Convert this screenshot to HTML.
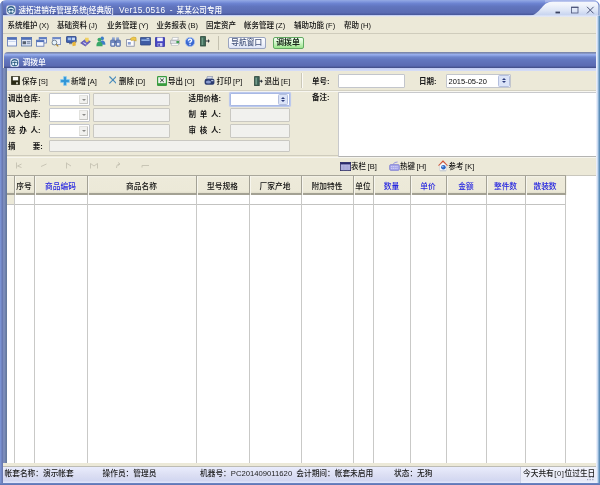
<!DOCTYPE html>
<html lang="zh-CN">
<head>
<meta charset="utf-8">
<title>速拓进销存管理系统[经典版]</title>
<style>
*{box-sizing:border-box;margin:0;padding:0}
html,body{width:600px;height:485px;overflow:hidden;background:#fff}
body{position:relative;font-family:"Liberation Sans","Noto Sans CJK SC",sans-serif;font-size:7.5px;line-height:9px;color:#111;-webkit-font-smoothing:antialiased}
.a{position:absolute;white-space:nowrap}
.t{position:absolute;white-space:nowrap;font-weight:500;color:#0c0c0c;letter-spacing:0}
.w{color:#fff}
.bl{color:#2626e0}
#win{filter:blur(0.3px);position:absolute;left:0;top:0;width:600px;height:485px;background:#ece9d8;border-radius:6px 7px 0 0;overflow:hidden}
#lb{left:0;top:0;width:3.2px;height:485px;background:linear-gradient(90deg,#7c94d6 0,#7890d0 1.2px,#6a7ab2 1.8px,#6878b0 3.2px)}
#rb{left:596.3px;top:16px;width:3.7px;height:469px;background:linear-gradient(90deg,#f1f2fc 0,#e6ecf9 0.9px,#b9d1ec 1.8px,#82aad0 2.7px,#5e8eb8 3.4px,#5e8eb8 3.7px)}
#bb{left:0;top:483.2px;width:600px;height:1.8px;background:linear-gradient(#7088c4,#5c74b4)}
#title{left:0;top:0;width:600px;height:16.5px}
#menu{left:3.3px;top:16.5px;width:593px;height:17px;background:#ece9d8;border-bottom:1px solid #cfccbc}
#tb{left:3.3px;top:34px;width:593px;height:19px;background:#ece9d8}
.ic{position:absolute;top:37px;width:10px;height:10px}
.btn{position:absolute;top:37.4px;height:11.5px;border:1px solid #9aa4bf;border-radius:2px;background:linear-gradient(#fdfdff,#f1f3fb 55%,#dde3f6);text-align:center;line-height:9.4px;font-weight:500;font-size:7.7px}
#child{left:4px;top:53.5px;width:593px;height:411px;background:#ece9d8}
#ctitle{left:4px;top:51.5px;width:593px;height:16.2px;background:linear-gradient(#7c88ac 0,#7c88ac 1.3px,#9cb2ee 1.8px,#94aaea 3px,#6f86cc 5px,#6276be 8px,#5a6ab2 14px,#46528e 15.3px,#44508c 16.2px);border-radius:4px 0 0 0}
#cstrip{left:4px;top:67.7px;width:593px;height:3px;background:linear-gradient(#c2ccf3,#d6def8)}
#clb{left:3.2px;top:68px;width:3.8px;height:395.3px;background:linear-gradient(90deg,#7b8cba 0,#7b8cba 2.2px,#667a9e 2.7px,#667a9e 3.5px,#d8dff6 3.8px)}
.inp{position:absolute;background:#fff;border:1px solid #c3c6cc;border-radius:1px}
.dis{position:absolute;background:#f1f1ee;border:1px solid #c9c8c2;border-radius:1px}
.dd{position:absolute;right:1px;top:1px;bottom:1.2px;width:9.4px;background:#f1f1ef;border:1px solid #e2e2de;border-right-color:#c4c4c0;border-bottom-color:#c4c4c0;border-radius:1px}
.dd:after{content:"";position:absolute;left:1.7px;top:3.2px;border:2.2px solid transparent;border-top:2.4px solid #8a8a88}
.lbl{font-weight:700;color:#161616}
.sp{word-spacing:1.7px}
.k{margin-left:1.6px}
#grid{left:7px;top:176px;width:589.5px;height:287.3px;background:#fff}
#ghead{left:7px;top:175.3px;width:558.5px;height:19.4px;background:linear-gradient(#a9a79b 0,#a9a79b 0.9px,#f3f1e6 1.3px,#edeada 3px,#ece9d8 16px,#e2dfcc 18px,#a3a193 18.5px,#a3a193 19.4px)}
.vl{position:absolute;top:194.5px;width:1.1px;height:268.8px;background:#c9c9c7}
.hl{position:absolute;left:7px;width:558px;height:1px;background:#c3c3c1}
.gh{position:absolute;top:181.6px;text-align:center;font-weight:500;font-size:7.7px}
#status{left:3.3px;top:465.8px;width:593.2px;height:17.5px;background:linear-gradient(#bdbcb4 0,#bdbcb4 0.8px,#e8ebfc 1.4px,#e4e7f9 4px,#dcdff3 9px,#d2d7f1 14.5px,#dfe4fa 16.3px,#dfe4fa 17.5px)}
.st{top:468.6px;font-weight:500;color:#1c1c1c;font-size:7.7px;word-spacing:2px}
</style>
</head>
<body>
<div id="win">
  <!-- title bar -->
  <svg class="a" id="title" viewBox="0 0 600 16.5" width="600" height="16.5">
    <defs>
      <linearGradient id="g1" x1="0" y1="0" x2="0" y2="1">
        <stop offset="0" stop-color="#95aae4"/><stop offset="0.1" stop-color="#8198de"/><stop offset="0.22" stop-color="#6b82d0"/><stop offset="0.4" stop-color="#6175be"/><stop offset="0.78" stop-color="#5a6bb2"/><stop offset="0.86" stop-color="#4c5ca0"/><stop offset="0.9" stop-color="#4a5a9c"/><stop offset="0.94" stop-color="#c6d0f4"/><stop offset="1" stop-color="#dde4fa"/>
      </linearGradient>
      <linearGradient id="g2" x1="0" y1="0" x2="0" y2="1">
        <stop offset="0" stop-color="#f6f8fd"/><stop offset="0.2" stop-color="#f1f4fb"/><stop offset="0.6" stop-color="#dde5f6"/><stop offset="0.88" stop-color="#c9d5f0"/><stop offset="0.93" stop-color="#d6dff6"/><stop offset="1" stop-color="#e2e8fa"/>
      </linearGradient>
    </defs>
    <rect x="0" y="0" width="600" height="16.5" fill="url(#g1)"/>
    <path d="M553 1.4 H594 Q598.4 1.4 598.4 6 V16.5 H525 C542 16.5 540 1.4 553 1.4 Z" fill="url(#g2)"/>
    <rect x="598.4" y="5" width="1.6" height="11.5" fill="#a6b9da"/>
    <path d="M545 0 H600 V1.4 H553 Q549 1.4 545 2.4 Z" fill="#b9c3ef" opacity="0.6"/>
    <!-- min / max / close -->
    <rect x="555.5" y="11.6" width="4.5" height="1.8" fill="#3a4260"/>
    <rect x="571.6" y="7.2" width="6.4" height="5.8" fill="none" stroke="#4c5478" stroke-width="0.8"/>
    <rect x="571.2" y="6.8" width="7.2" height="1.1" fill="#4c5478"/>
    <path d="M587 6.8 L593.6 13.4 M593.6 6.8 L587 13.4" stroke="#4c5478" stroke-width="1" fill="none"/>
  </svg>
  <!-- app icon -->
  <svg class="a" style="left:5.8px;top:5px" width="10" height="10" viewBox="0 0 10 10">
    <rect x="0.2" y="0.2" width="9.6" height="9.6" rx="2.4" fill="#f0f4fd" stroke="#5a6aa8" stroke-width="0.4"/>
    <circle cx="5" cy="5" r="3.9" fill="#2f5f86"/>
    <path d="M2.3 4.5 Q5 1.9 7.7 4.5" stroke="#e8f6ff" stroke-width="1.2" fill="none"/>
    <ellipse cx="3.5" cy="6.5" rx="1.15" ry="1.3" fill="#e8f6ff"/><ellipse cx="6.5" cy="6.5" rx="1.15" ry="1.3" fill="#e8f6ff"/>
  </svg>
  <div class="t w" style="left:18.4px;top:5.8px;font-size:7.6px;word-spacing:1.6px"><span>速拓进销存管理系统[经典版]</span> <span style="font-size:8.3px;letter-spacing:0.42px;margin-left:1.5px">Ver15.0516</span> <span style="font-size:8.3px;margin:0 0.4px">-</span> <span>某某公司专用</span></div>

  <!-- menu bar -->
  <div class="a" id="menu"></div>
  <div class="t" style="left:7.5px;top:21.2px">系统维护<span class="k">(X)</span></div>
  <div class="t" style="left:57px;top:21.2px">基础资料<span class="k">(J)</span></div>
  <div class="t" style="left:107px;top:21.2px">业务管理<span class="k">(Y)</span></div>
  <div class="t" style="left:156.5px;top:21.2px">业务报表<span class="k">(B)</span></div>
  <div class="t" style="left:206px;top:21.2px">固定资产</div>
  <div class="t" style="left:244px;top:21.2px">帐务管理<span class="k">(Z)</span></div>
  <div class="t" style="left:294px;top:21.2px">辅助功能<span class="k">(F)</span></div>
  <div class="t" style="left:344px;top:21.2px">帮助<span class="k">(H)</span></div>

  <!-- main toolbar -->
  <div class="a" id="tb"></div>
  <div id="icons">
  <svg class="a" style="left:6.5px;top:36.5px" width="10" height="10" viewBox="0 0 10 10"><rect x="0.4" y="0.4" width="9.2" height="8.6" fill="#f4f7fd" stroke="#5a74b4" stroke-width="0.8"/><rect x="0.4" y="0.4" width="9.2" height="2.4" fill="#4f6fb8"/><rect x="1.4" y="4" width="7.2" height="1" fill="#c9d6ef"/></svg>
  <svg class="a" style="left:20.5px;top:36.5px" width="11" height="10" viewBox="0 0 11 10"><rect x="0.4" y="0.4" width="10.2" height="8.6" fill="#dfe7f6" stroke="#56709f" stroke-width="0.8"/><rect x="0.4" y="0.4" width="10.2" height="2.4" fill="#4f6fb8"/><rect x="1.6" y="4.2" width="3.4" height="3" fill="#56606f"/><rect x="5.8" y="4.4" width="3.6" height="0.9" fill="#4b5a78"/><rect x="5.8" y="6.2" width="3.6" height="0.9" fill="#7b8aa8"/></svg>
  <svg class="a" style="left:35.5px;top:36.5px" width="11" height="10" viewBox="0 0 11 10"><rect x="3.2" y="0.4" width="7.2" height="5.6" fill="#eef2fb" stroke="#5a74b4" stroke-width="0.8"/><rect x="3.2" y="0.4" width="7.2" height="1.8" fill="#5b7cc4"/><rect x="0.5" y="3.2" width="7.4" height="6" fill="#f4f7fd" stroke="#5a74b4" stroke-width="0.8"/><rect x="0.5" y="3.2" width="7.4" height="1.9" fill="#4f6fb8"/></svg>
  <svg class="a" style="left:51px;top:36.5px" width="10" height="10" viewBox="0 0 10 10"><rect x="1.8" y="0.4" width="7.8" height="7" fill="#f1f4fb" stroke="#6a80b8" stroke-width="0.8"/><rect x="1.8" y="0.4" width="7.8" height="1.8" fill="#6c88c8"/><circle cx="3.4" cy="5.6" r="2.4" fill="#e8f4fb" stroke="#6f7f8f" stroke-width="0.9"/><path d="M5.2 7.4 L7.2 9.4" stroke="#b08a30" stroke-width="1.3"/></svg>
  <svg class="a" style="left:65.5px;top:36px" width="11" height="11" viewBox="0 0 11 11"><rect x="0.5" y="0.5" width="9.6" height="6" rx="0.6" fill="#3e5fb0" stroke="#2d4688" stroke-width="0.8"/><rect x="1.8" y="1.6" width="3.2" height="2.6" fill="#9fc0ec"/><rect x="5.8" y="1.6" width="3.2" height="2.6" fill="#c6d9f4"/><path d="M6.2 6.5 L9.6 5.2 L9.8 9.6 L6.6 10.2 Z" fill="#e8b63c"/><rect x="3" y="7" width="3" height="1.2" fill="#7c8698"/></svg>
  <svg class="a" style="left:80px;top:36.5px" width="11" height="10" viewBox="0 0 11 10"><path d="M0.6 6 L5.6 2.2 L10.4 4.6 L5.4 9 Z" fill="#6a62c4" stroke="#48439a" stroke-width="0.6"/><path d="M5 0.8 L8.6 0.8 L8.8 4.2 L6.6 5.4 L5.2 3.6 Z" fill="#f0d060"/><path d="M3.4 5.6 L6.2 7.2" stroke="#e8eafa" stroke-width="1"/></svg>
  <svg class="a" style="left:96px;top:36px" width="10" height="11" viewBox="0 0 10 11"><circle cx="6.2" cy="2.4" r="1.8" fill="#3f7fc8"/><path d="M3.4 8.6 Q3.6 4.2 6.4 4.4 Q9.4 4.6 9.4 8.8 Z" fill="#3f7fc8"/><circle cx="3.4" cy="3.6" r="1.9" fill="#3aa868"/><path d="M0.4 10.2 Q0.4 5.6 3.4 5.6 Q6.6 5.6 6.6 10.2 Z" fill="#3aa868"/></svg>
  <svg class="a" style="left:110px;top:36.5px" width="11" height="10" viewBox="0 0 11 10"><rect x="2" y="0.4" width="2.8" height="3" fill="#8ea4cf"/><rect x="6.2" y="0.4" width="2.8" height="3" fill="#8ea4cf"/><rect x="0.5" y="3" width="4.6" height="6.4" rx="1" fill="#6f88c0" stroke="#4e679f" stroke-width="0.6"/><rect x="5.9" y="3" width="4.6" height="6.4" rx="1" fill="#6f88c0" stroke="#4e679f" stroke-width="0.6"/><rect x="1.6" y="6" width="2.4" height="2.4" fill="#e6ecf8"/><rect x="7" y="6" width="2.4" height="2.4" fill="#e6ecf8"/><rect x="4.6" y="3.8" width="1.8" height="2" fill="#4e679f"/></svg>
  <svg class="a" style="left:125.5px;top:36px" width="11" height="11" viewBox="0 0 11 11"><rect x="0.6" y="3.6" width="7.6" height="6.6" fill="#fbfbfd" stroke="#8088a0" stroke-width="0.8"/><rect x="1.8" y="6" width="3" height="2.6" fill="#8aa0d0"/><path d="M4.4 2.6 Q7 0 10 1.6 L10.2 5 L7.6 4.2 L5.2 4.6 Z" fill="#eec84a" stroke="#c09a28" stroke-width="0.5"/></svg>
  <svg class="a" style="left:140px;top:37px" width="11" height="9" viewBox="0 0 11 9"><rect x="0.4" y="0.4" width="10.2" height="7.6" rx="0.6" fill="#3e5ca4" stroke="#2e4784" stroke-width="0.8"/><rect x="1.4" y="2.4" width="8.2" height="1.6" fill="#8fb0e4"/><rect x="6.6" y="1.2" width="2.6" height="0.8" fill="#c8d8f4"/></svg>
  <svg class="a" style="left:155px;top:36.5px" width="10" height="10" viewBox="0 0 10 10"><rect x="0.4" y="0.4" width="9.2" height="9.2" rx="0.6" fill="#4646c4" stroke="#3030a0" stroke-width="0.8"/><rect x="2.2" y="0.6" width="5.6" height="3.6" fill="#f2f2fc"/><rect x="2.6" y="6" width="4.8" height="3.4" fill="#c8c8ee"/><rect x="3.4" y="6.6" width="1.4" height="2.4" fill="#3838a8"/></svg>
  <svg class="a" style="left:169.5px;top:37px" width="10" height="9" viewBox="0 0 10 9"><path d="M2.6 0.4 L8.4 0.4 L7.6 3.4 L1.8 3.4 Z" fill="#fdfdfd" stroke="#9aa0a8" stroke-width="0.5"/><rect x="0.4" y="3.2" width="9.2" height="3.8" rx="0.8" fill="#dfe2e6" stroke="#8d939b" stroke-width="0.6"/><rect x="1.4" y="6.4" width="7" height="2" fill="#fafafa" stroke="#a0a4aa" stroke-width="0.4"/><rect x="6.4" y="4" width="2.6" height="2.2" fill="#3fa050"/></svg>
  <svg class="a" style="left:185px;top:36.5px" width="10" height="10" viewBox="0 0 10 10"><circle cx="5" cy="5" r="4.6" fill="#3a68d0" stroke="#a8c0f0" stroke-width="0.8"/><circle cx="5" cy="3.6" r="2.6" fill="#5c8ae6"/><path d="M3.4 3.8 Q3.4 2.2 5 2.2 Q6.6 2.2 6.6 3.6 Q6.6 4.6 5 5.2 L5 6.2" fill="none" stroke="#fff" stroke-width="1.2"/><rect x="4.4" y="7" width="1.2" height="1.2" fill="#fff"/></svg>
  <svg class="a" style="left:200px;top:36px" width="10" height="11" viewBox="0 0 10 11"><rect x="0.6" y="0.6" width="4.8" height="9.4" fill="#3f6a58" stroke="#28463a" stroke-width="0.8"/><rect x="1.6" y="1.6" width="1.6" height="7.4" fill="#6f9a86"/><path d="M5.8 4.4 L8 4.4 L8 3 L9.8 5 L8 7 L8 5.6 L5.8 5.6 Z" fill="#30343c"/></svg>
</div>
  <div class="a" style="left:217.5px;top:36px;width:1px;height:14px;background:#c4c1b0"></div>
  <div class="btn" style="left:227.5px;width:38.5px;color:#44547c">导航窗口</div>
  <div class="btn" style="left:272.5px;width:31px;background:linear-gradient(#f4fff2,#d4f7cc 45%,#9be58c);border-color:#62aa62;color:#1c2c1c;font-weight:700;font-size:7.9px">调拨单</div>

  <!-- child window -->
  <div class="a" id="child"></div>
  <div class="a" id="ctitle"></div>
  <div class="a" id="cstrip"></div>
  <div class="a" id="clb"></div>
  <svg class="a" style="left:10px;top:57.6px" width="9.3" height="9.3" viewBox="0 0 10 10">
    <rect x="0.2" y="0.2" width="9.6" height="9.6" rx="2.4" fill="#f0f4fd" stroke="#5a6aa8" stroke-width="0.4"/>
    <circle cx="5" cy="5" r="3.9" fill="#2f5f86"/>
    <path d="M2.3 4.5 Q5 1.9 7.7 4.5" stroke="#e8f6ff" stroke-width="1.2" fill="none"/>
    <ellipse cx="3.5" cy="6.5" rx="1.15" ry="1.3" fill="#e8f6ff"/><ellipse cx="6.5" cy="6.5" rx="1.15" ry="1.3" fill="#e8f6ff"/>
  </svg>
  <div class="t w" style="left:22.5px;top:58px;font-size:7.8px">调拨单</div>

  <!-- child toolbar -->
  <div class="a" style="left:7px;top:90px;width:589.5px;height:1px;background:#d4d1c2"></div>
  <div class="a" style="left:7px;top:91px;width:589.5px;height:1px;background:#f8f7f1"></div>
  <div class="a" style="left:300.5px;top:73px;width:1px;height:15px;background:#cbc8b8"></div>
  <div class="a" style="left:301.5px;top:73px;width:1px;height:15px;background:#fbfaf6"></div>

  <svg class="a" style="left:10.8px;top:76.3px" width="9" height="9" viewBox="0 0 9 9"><rect x="0.3" y="0.3" width="8.4" height="8.4" rx="0.5" fill="#2a2a14" stroke="#1c1c0c" stroke-width="0.6"/><rect x="1.8" y="0.8" width="5.4" height="3.6" fill="#fbfbf6"/><rect x="5.2" y="6.2" width="1.6" height="2" fill="#e8e8dc"/></svg>
  <svg class="a" style="left:59.5px;top:76px" width="10" height="10" viewBox="0 0 10 10"><path d="M3.6 0.6 H6.4 V3.6 H9.4 V6.4 H6.4 V9.4 H3.6 V6.4 H0.6 V3.6 H3.6 Z" fill="#2f95d6" stroke="#8fd0f4" stroke-width="0.7"/></svg>
  <svg class="a" style="left:108.6px;top:76.3px" width="7.8" height="7.8" viewBox="0 0 8.5 8.5"><path d="M0.8 0.8 L7.7 7.7 M7.7 0.8 L0.8 7.7" stroke="#4a8cbc" stroke-width="1.25" stroke-linecap="round"/></svg>
  <svg class="a" style="left:156.5px;top:75.8px" width="10" height="10" viewBox="0 0 10 10"><rect x="0.6" y="0.6" width="8.8" height="8.8" rx="0.6" fill="#eef2ee" stroke="#3a9c40" stroke-width="1.2"/><rect x="0.6" y="7.2" width="8.8" height="2.2" fill="#3a9c40"/><path d="M3.2 2.6 L6.8 6 M6.8 2.6 L3.2 6" stroke="#2a3c30" stroke-width="1"/></svg>
  <svg class="a" style="left:204.2px;top:76px" width="11" height="9.5" viewBox="0 0 11 9.5"><path d="M3.4 0.4 L8.6 0.4 L7.8 3 L2.6 3 Z" fill="#d8deee" stroke="#5a6890" stroke-width="0.5"/><path d="M0.6 5 Q0.6 2.8 2.8 2.8 H9 Q10.4 2.8 10.4 4.4 V7 Q10.4 8.8 8.6 8.8 H2.4 Q0.6 8.8 0.6 7 Z" fill="#2c3c70"/><ellipse cx="4.4" cy="6" rx="2.6" ry="1.6" fill="#8a9cd0"/><rect x="7.2" y="4" width="2.2" height="1.2" fill="#b8c4e4"/></svg>
  <svg class="a" style="left:254.4px;top:75.8px" width="9" height="10.5" viewBox="0 0 9 10.5"><rect x="0.6" y="0.6" width="4.6" height="9" fill="#40665a" stroke="#2a4438" stroke-width="0.8"/><rect x="1.5" y="1.6" width="1.4" height="7" fill="#7aa090"/><path d="M5.4 4.6 L7 4.6 L7 3.4 L8.8 5.2 L7 7 L7 5.8 L5.4 5.8 Z" fill="#2c3038"/></svg>
  <div class="t" style="left:22px;top:76.9px">保存<span class="k">[S]</span></div>
  <div class="t" style="left:71px;top:76.9px">新增<span class="k">[A]</span></div>
  <div class="t" style="left:119px;top:76.9px">删除<span class="k">[D]</span></div>
  <div class="t" style="left:168px;top:76.9px">导出<span class="k">[O]</span></div>
  <div class="t" style="left:216.5px;top:76.9px">打印<span class="k">[P]</span></div>
  <div class="t" style="left:264.5px;top:76.9px">退出<span class="k">[E]</span></div>
  <div class="t lbl" style="left:312px;top:76.9px">单号:</div>
  <div class="inp" style="left:338px;top:74px;width:66.5px;height:13.7px"></div>
  <div class="t lbl" style="left:419px;top:76.9px">日期:</div>
  <div class="inp" style="left:446px;top:74px;width:65px;height:13.7px"></div>
  <div class="t" style="left:448.5px;top:76.9px;font-weight:400">2015-05-20</div>
  <div class="a" style="left:498.3px;top:75.3px;width:11.4px;height:11.4px;background:#dbe3f7;border:1px solid #b4bfde;border-radius:1.5px"></div>
  <div class="a" style="left:502px;top:78px;border:2px solid transparent;border-bottom:2.2px solid #2c3c7c;border-top:0"></div>
  <div class="a" style="left:502px;top:81.4px;border:2px solid transparent;border-top:2.2px solid #2c3c7c;border-bottom:0"></div>

  <!-- form -->
  <div class="t lbl" style="left:8px;top:94.4px">调出仓库:</div>
  <div class="t lbl" style="left:8px;top:110.15px">调入仓库:</div>
  <div class="t lbl sp" style="left:8px;top:125.9px">经 办 人:</div>
  <div class="t lbl" style="left:8px;top:141.65px">摘</div><div class="t lbl" style="left:32.7px;top:141.65px">要:</div>
  <div class="inp" style="left:49.3px;top:92.5px;width:41.2px;height:13.8px"><div class="dd"></div></div>
  <div class="dis" style="left:92.6px;top:92.5px;width:77.2px;height:13.8px"></div>
  <div class="inp" style="left:49.3px;top:108.25px;width:41.2px;height:13.8px"><div class="dd"></div></div>
  <div class="dis" style="left:92.6px;top:108.25px;width:77.2px;height:13.8px"></div>
  <div class="inp" style="left:49.3px;top:124px;width:41.2px;height:13.8px"><div class="dd"></div></div>
  <div class="dis" style="left:92.6px;top:124px;width:77.2px;height:13.8px"></div>
  <div class="dis" style="left:49.3px;top:139.95px;width:240.4px;height:12.5px"></div>
  <div class="t lbl" style="left:188.5px;top:94.4px">适用价格:</div>
  <div class="t lbl sp" style="left:188.5px;top:110.15px">制 单 人:</div>
  <div class="t lbl sp" style="left:188.5px;top:125.9px">审 核 人:</div>
  <div class="inp" style="left:229.8px;top:92.7px;width:60px;height:13.6px;border-color:#a9b9e4;box-shadow:0 0 0.8px 0.4px #b9c6ee"></div>
  <div class="a" style="left:278.3px;top:94.4px;width:10.2px;height:10.2px;background:#dbe3f7;border:1px solid #b4bfde;border-radius:1.5px"></div>
  <div class="a" style="left:281.4px;top:96.6px;border:2px solid transparent;border-bottom:2.2px solid #2c3c7c;border-top:0"></div>
  <div class="a" style="left:281.4px;top:99.8px;border:2px solid transparent;border-top:2.2px solid #2c3c7c;border-bottom:0"></div>
  <div class="dis" style="left:229.8px;top:108.25px;width:60px;height:13.8px"></div>
  <div class="dis" style="left:229.8px;top:124px;width:60px;height:13.8px"></div>
  <div class="t lbl" style="left:312px;top:93px">备注:</div>
  <div class="inp" style="left:338px;top:92px;width:259px;height:64.5px;border-color:#c8c9cc;border-bottom-color:#b4b4b2"></div>

  <!-- navigator bar -->
  <div class="a" style="left:7px;top:155.3px;width:331px;height:1.2px;background:#cfccbd"></div><div class="a" style="left:7px;top:156.5px;width:589.5px;height:1px;background:#f6f5ee"></div>

  <svg class="a" style="left:12px;top:160px" width="150" height="10" viewBox="0 0 150 10">
    <g stroke="#c4c1b1" stroke-width="0.9" fill="none">
      <path d="M4.5 2.5 V8.5 M9.5 4 L5.5 6 L9.5 7.5"/>
      <path d="M34.5 4 L29 6.5"/>
      <path d="M54.5 2.5 V8.5 M55 3.5 L59 6 "/>
      <path d="M78.5 8.5 V3.5 L82 6 L85.5 3.5 V8.5"/>
      <path d="M104.5 8 Q104 4.5 107.5 4 M106 2.5 L108 4 L106 5.5"/>
      <path d="M130 7.5 V5.5 H137"/>
    </g>
  </svg>

  <svg class="a" style="left:340px;top:161.8px" width="11" height="9" viewBox="0 0 11 9"><rect x="0.4" y="0.4" width="10.2" height="8.2" fill="#b4b4e2" stroke="#2c2c62" stroke-width="0.8"/><rect x="0.4" y="0.4" width="10.2" height="2" fill="#2a2a6c"/><path d="M0.8 5 H10.2 M0.8 7 H10.2 M3.8 2.4 V8.4 M7.2 2.4 V8.4" stroke="#9a9acc" stroke-width="0.4"/></svg>
  <svg class="a" style="left:388.5px;top:161px" width="11" height="10" viewBox="0 0 11 10"><path d="M4 3.6 Q5 0.8 8.6 1" fill="none" stroke="#8c8cdc" stroke-width="0.9"/><path d="M0.6 5 Q0.6 3.6 2 3.6 H9 Q10.4 3.6 10.4 5 V8 Q10.4 9.4 9 9.4 H2 Q0.6 9.4 0.6 8 Z" fill="#a6a6ea" stroke="#7c7cd0" stroke-width="0.7"/><path d="M2 5.6 H9 M2 7.4 H9" stroke="#e6e6fa" stroke-width="0.7" stroke-dasharray="1.2 0.6"/></svg>
  <svg class="a" style="left:437.8px;top:160.4px" width="10" height="12" viewBox="0 0 10 12"><path d="M0.4 5.4 L5 0.6 L9.6 5.4 L8 5.4 L5 2.6 L2 5.4 Z" fill="#dc4422" stroke="#c0381c" stroke-width="0.4"/><path d="M1.6 5.2 L5 2.2 L8.4 5.2 V10.4 H1.6 Z" fill="#fafafa" stroke="#c4c4cc" stroke-width="0.5"/><circle cx="5.4" cy="7.2" r="2.3" fill="#2c66c4"/><circle cx="4.8" cy="6.6" r="0.9" fill="#9cc0f0"/><rect x="2" y="10.2" width="6" height="1.2" fill="#c8ccd4"/></svg>
  <div class="t" style="left:351px;top:161.7px">表栏<span class="k">[B]</span></div>
  <div class="t" style="left:400px;top:161.7px">热键<span class="k">[H]</span></div>
  <div class="t" style="left:448.5px;top:161.7px">参考<span class="k">[K]</span></div>

  <!-- grid -->
  <div class="a" id="grid"></div>
  <div class="a" style="left:565.5px;top:175.3px;width:31px;height:1px;background:#c9c7bd"></div>
  <div class="a" id="ghead"></div>
  <div class="a" style="left:7px;top:194.7px;width:7px;height:9.3px;background:#ece9d8"></div><div class="hl" style="top:204px"></div>
  <div id="vls"><div class="vl" style="left:14px"></div><div class="vl" style="left:34px"></div><div class="vl" style="left:87px"></div><div class="vl" style="left:196px"></div><div class="vl" style="left:249px"></div><div class="vl" style="left:301px"></div><div class="vl" style="left:353px"></div><div class="vl" style="left:373px"></div><div class="vl" style="left:410px"></div><div class="vl" style="left:446px"></div><div class="vl" style="left:486px"></div><div class="vl" style="left:525px"></div><div class="vl" style="left:565px"></div></div>
  <div class="a" style="left:14px;top:176.2px;width:1.1px;height:18.5px;background:#a3a195;box-shadow:1px 0 0 #f7f6ee"></div><div class="a" style="left:34px;top:176.2px;width:1.1px;height:18.5px;background:#a3a195;box-shadow:1px 0 0 #f7f6ee"></div><div class="a" style="left:87px;top:176.2px;width:1.1px;height:18.5px;background:#a3a195;box-shadow:1px 0 0 #f7f6ee"></div><div class="a" style="left:196px;top:176.2px;width:1.1px;height:18.5px;background:#a3a195;box-shadow:1px 0 0 #f7f6ee"></div><div class="a" style="left:249px;top:176.2px;width:1.1px;height:18.5px;background:#a3a195;box-shadow:1px 0 0 #f7f6ee"></div><div class="a" style="left:301px;top:176.2px;width:1.1px;height:18.5px;background:#a3a195;box-shadow:1px 0 0 #f7f6ee"></div><div class="a" style="left:353px;top:176.2px;width:1.1px;height:18.5px;background:#a3a195;box-shadow:1px 0 0 #f7f6ee"></div><div class="a" style="left:373px;top:176.2px;width:1.1px;height:18.5px;background:#a3a195;box-shadow:1px 0 0 #f7f6ee"></div><div class="a" style="left:410px;top:176.2px;width:1.1px;height:18.5px;background:#a3a195;box-shadow:1px 0 0 #f7f6ee"></div><div class="a" style="left:446px;top:176.2px;width:1.1px;height:18.5px;background:#a3a195;box-shadow:1px 0 0 #f7f6ee"></div><div class="a" style="left:486px;top:176.2px;width:1.1px;height:18.5px;background:#a3a195;box-shadow:1px 0 0 #f7f6ee"></div><div class="a" style="left:525px;top:176.2px;width:1.1px;height:18.5px;background:#a3a195;box-shadow:1px 0 0 #f7f6ee"></div><div class="a" style="left:565px;top:176.2px;width:1.1px;height:18.5px;background:#a3a195;box-shadow:1px 0 0 #f7f6ee"></div>
  <div class="gh" style="left:14px;width:20px">序号</div>
  <div class="gh bl" style="left:34px;width:53px">商品编码</div>
  <div class="gh" style="left:87px;width:109px">商品名称</div>
  <div class="gh" style="left:196px;width:53px">型号规格</div>
  <div class="gh" style="left:249px;width:52px">厂家产地</div>
  <div class="gh" style="left:301px;width:52px">附加特性</div>
  <div class="gh" style="left:353px;width:20px">单位</div>
  <div class="gh bl" style="left:373px;width:37px">数量</div>
  <div class="gh bl" style="left:410px;width:36px">单价</div>
  <div class="gh bl" style="left:446px;width:40px">金额</div>
  <div class="gh bl" style="left:486px;width:39px">整件数</div>
  <div class="gh bl" style="left:525px;width:40px">散装数</div>

  <!-- status bar -->
  <div class="a" id="status"></div>
  <div class="a" style="left:520.3px;top:467px;width:76px;height:15.5px;background:rgba(255,255,255,0.45);border-left:1px solid #cdd1e6"></div>
  <svg class="a" style="left:586px;top:476px" width="9" height="5" viewBox="0 0 9 5"><g fill="#9aa0b8"><rect x="1" y="3" width="1.2" height="1.2"/><rect x="3.6" y="3" width="1.2" height="1.2"/><rect x="6.2" y="3" width="1.2" height="1.2"/><rect x="3.6" y="0.8" width="1.2" height="1.2"/><rect x="6.2" y="0.8" width="1.2" height="1.2"/></g></svg>
  <div class="t st" style="left:4.5px">帐套名称：演示帐套</div>
  <div class="t st" style="left:102.5px">操作员：管理员</div>
  <div class="t st" style="left:200px">机器号：PC201409011620 会计期间：帐套未启用</div>
  <div class="t st" style="left:394px">状态：无狗</div>
  <div class="t st" style="left:523px">今天共有<span style="letter-spacing:0.6px;margin-left:0.4px">[0]</span>位过生日</div>

  <!-- borders -->
  <div class="a" id="lb"></div>
  <div class="a" id="rb"></div>
  <div class="a" id="bb"></div>
</div>
</body>
</html>
